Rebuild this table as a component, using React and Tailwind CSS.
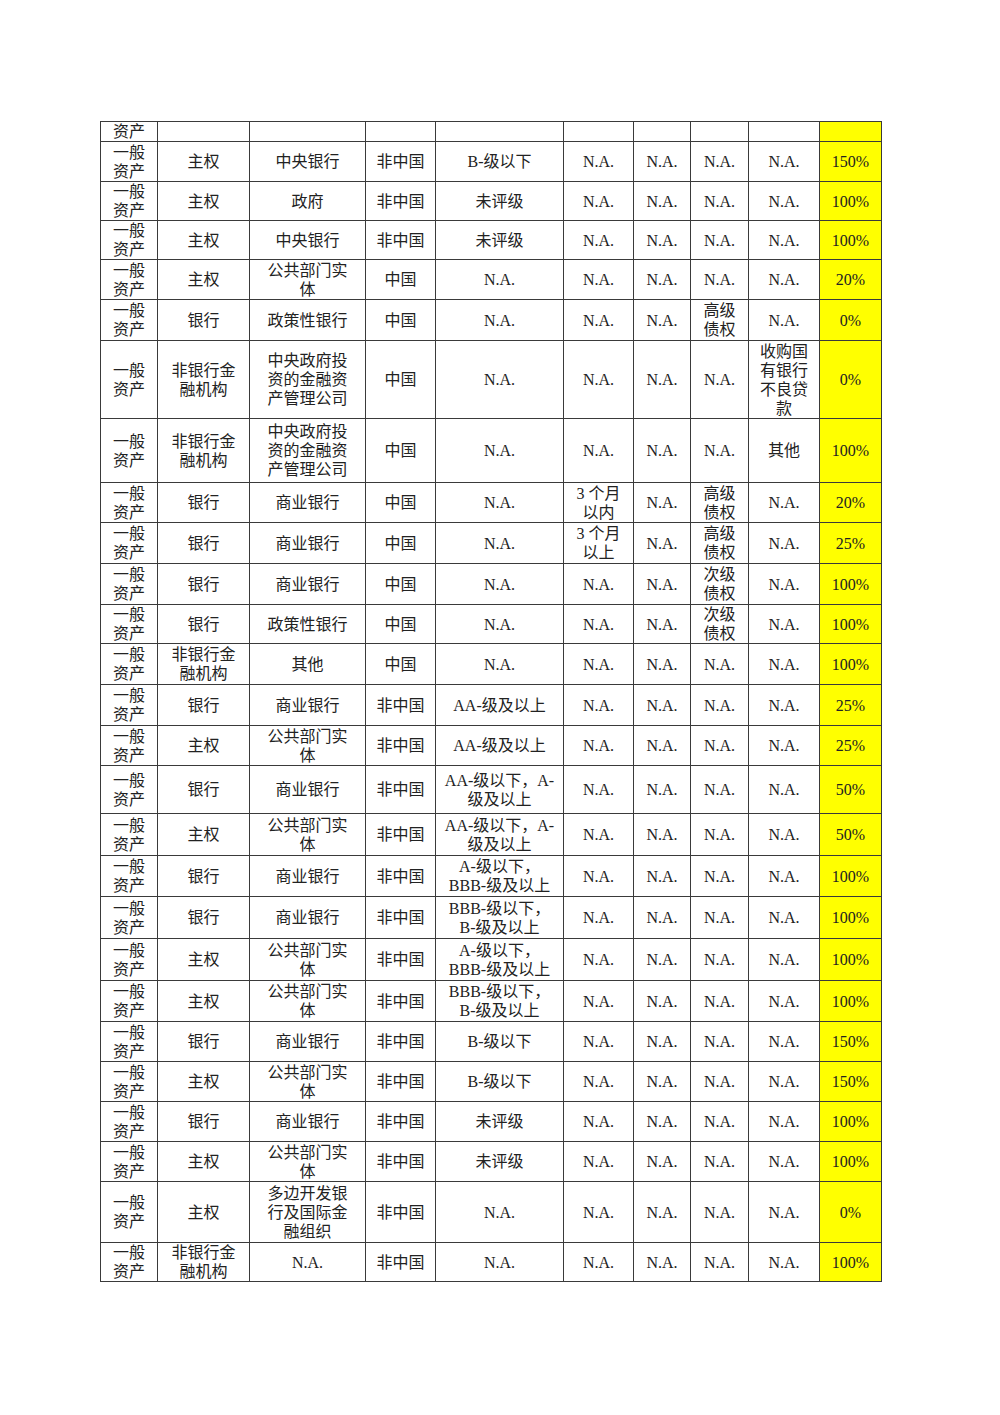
import React from "react";

const NA = "N.A.";

// [h, 类别, 主体, 子类, 地区, 评级, 期限, c7, 债权, 其他, 权重]
const rows = [
  [20, "资产", "", "", "", "", "", "", "", "", ""],
  [40, "一般\n资产", "主权", "中央银行", "非中国", "B-级以下", NA, NA, NA, NA, "150%"],
  [39, "一般\n资产", "主权", "政府", "非中国", "未评级", NA, NA, NA, NA, "100%"],
  [39, "一般\n资产", "主权", "中央银行", "非中国", "未评级", NA, NA, NA, NA, "100%"],
  [40, "一般\n资产", "主权", "公共部门实\n体", "中国", NA, NA, NA, NA, NA, "20%"],
  [41, "一般\n资产", "银行", "政策性银行", "中国", NA, NA, NA, "高级\n债权", NA, "0%"],
  [78, "一般\n资产", "非银行金\n融机构", "中央政府投\n资的金融资\n产管理公司", "中国", NA, NA, NA, NA, "收购国\n有银行\n不良贷\n款", "0%"],
  [64, "一般\n资产", "非银行金\n融机构", "中央政府投\n资的金融资\n产管理公司", "中国", NA, NA, NA, NA, "其他", "100%"],
  [40, "一般\n资产", "银行", "商业银行", "中国", NA, "3 个月\n以内", NA, "高级\n债权", NA, "20%"],
  [41, "一般\n资产", "银行", "商业银行", "中国", NA, "3 个月\n以上", NA, "高级\n债权", NA, "25%"],
  [41, "一般\n资产", "银行", "商业银行", "中国", NA, NA, NA, "次级\n债权", NA, "100%"],
  [39, "一般\n资产", "银行", "政策性银行", "中国", NA, NA, NA, "次级\n债权", NA, "100%"],
  [41, "一般\n资产", "非银行金\n融机构", "其他", "中国", NA, NA, NA, NA, NA, "100%"],
  [41, "一般\n资产", "银行", "商业银行", "非中国", "AA-级及以上", NA, NA, NA, NA, "25%"],
  [40, "一般\n资产", "主权", "公共部门实\n体", "非中国", "AA-级及以上", NA, NA, NA, NA, "25%"],
  [48, "一般\n资产", "银行", "商业银行", "非中国", "AA-级以下，A-\n级及以上", NA, NA, NA, NA, "50%"],
  [42, "一般\n资产", "主权", "公共部门实\n体", "非中国", "AA-级以下，A-\n级及以上", NA, NA, NA, NA, "50%"],
  [41, "一般\n资产", "银行", "商业银行", "非中国", "A-级以下，\nBBB-级及以上", NA, NA, NA, NA, "100%"],
  [42, "一般\n资产", "银行", "商业银行", "非中国", "BBB-级以下，\nB-级及以上", NA, NA, NA, NA, "100%"],
  [42, "一般\n资产", "主权", "公共部门实\n体", "非中国", "A-级以下，\nBBB-级及以上", NA, NA, NA, NA, "100%"],
  [41, "一般\n资产", "主权", "公共部门实\n体", "非中国", "BBB-级以下，\nB-级及以上", NA, NA, NA, NA, "100%"],
  [40, "一般\n资产", "银行", "商业银行", "非中国", "B-级以下", NA, NA, NA, NA, "150%"],
  [40, "一般\n资产", "主权", "公共部门实\n体", "非中国", "B-级以下", NA, NA, NA, NA, "150%"],
  [40, "一般\n资产", "银行", "商业银行", "非中国", "未评级", NA, NA, NA, NA, "100%"],
  [40, "一般\n资产", "主权", "公共部门实\n体", "非中国", "未评级", NA, NA, NA, NA, "100%"],
  [61, "一般\n资产", "主权", "多边开发银\n行及国际金\n融组织", "非中国", NA, NA, NA, NA, NA, "0%"],
  [39, "一般\n资产", "非银行金\n融机构", NA, "非中国", NA, NA, NA, NA, NA, "100%"],
];

const widths = ["w-[57px]", "w-[92px]", "w-[116px]", "w-[70px]", "w-[128px]", "w-[70px]", "w-[57px]", "w-[58px]", "w-[71px]", "w-[62px]"];

const Cell = ({ text, last }) => (
  <td
    className={
      "border border-[#3a3a3a] p-0 text-center align-middle leading-[19px] whitespace-pre-line overflow-hidden " +
      (last ? "bg-[#ffff00]" : "bg-white")
    }
  >
    {text}
  </td>
);

const App = () => {
  return (
    <div className="w-[1000px] min-h-[1415px] bg-white pt-[121px] pl-[100px]">
      <table
        className="table-fixed border-collapse text-[16px] text-[#222] w-[782px]"
        style={{ fontFamily: '"Liberation Serif", "Noto Sans CJK SC", serif' }}
      >
        <colgroup>
          {widths.map((w, i) => (
            <col key={i} className={w} />
          ))}
        </colgroup>
        <tbody>
          {rows.map((r, i) => (
            <tr key={i} style={{ height: r[0] }}>
              {r.slice(1).map((t, j) => (
                <Cell key={j} text={t} last={j === 9} />
              ))}
            </tr>
          ))}
        </tbody>
      </table>
    </div>
  );
};

export default App;
